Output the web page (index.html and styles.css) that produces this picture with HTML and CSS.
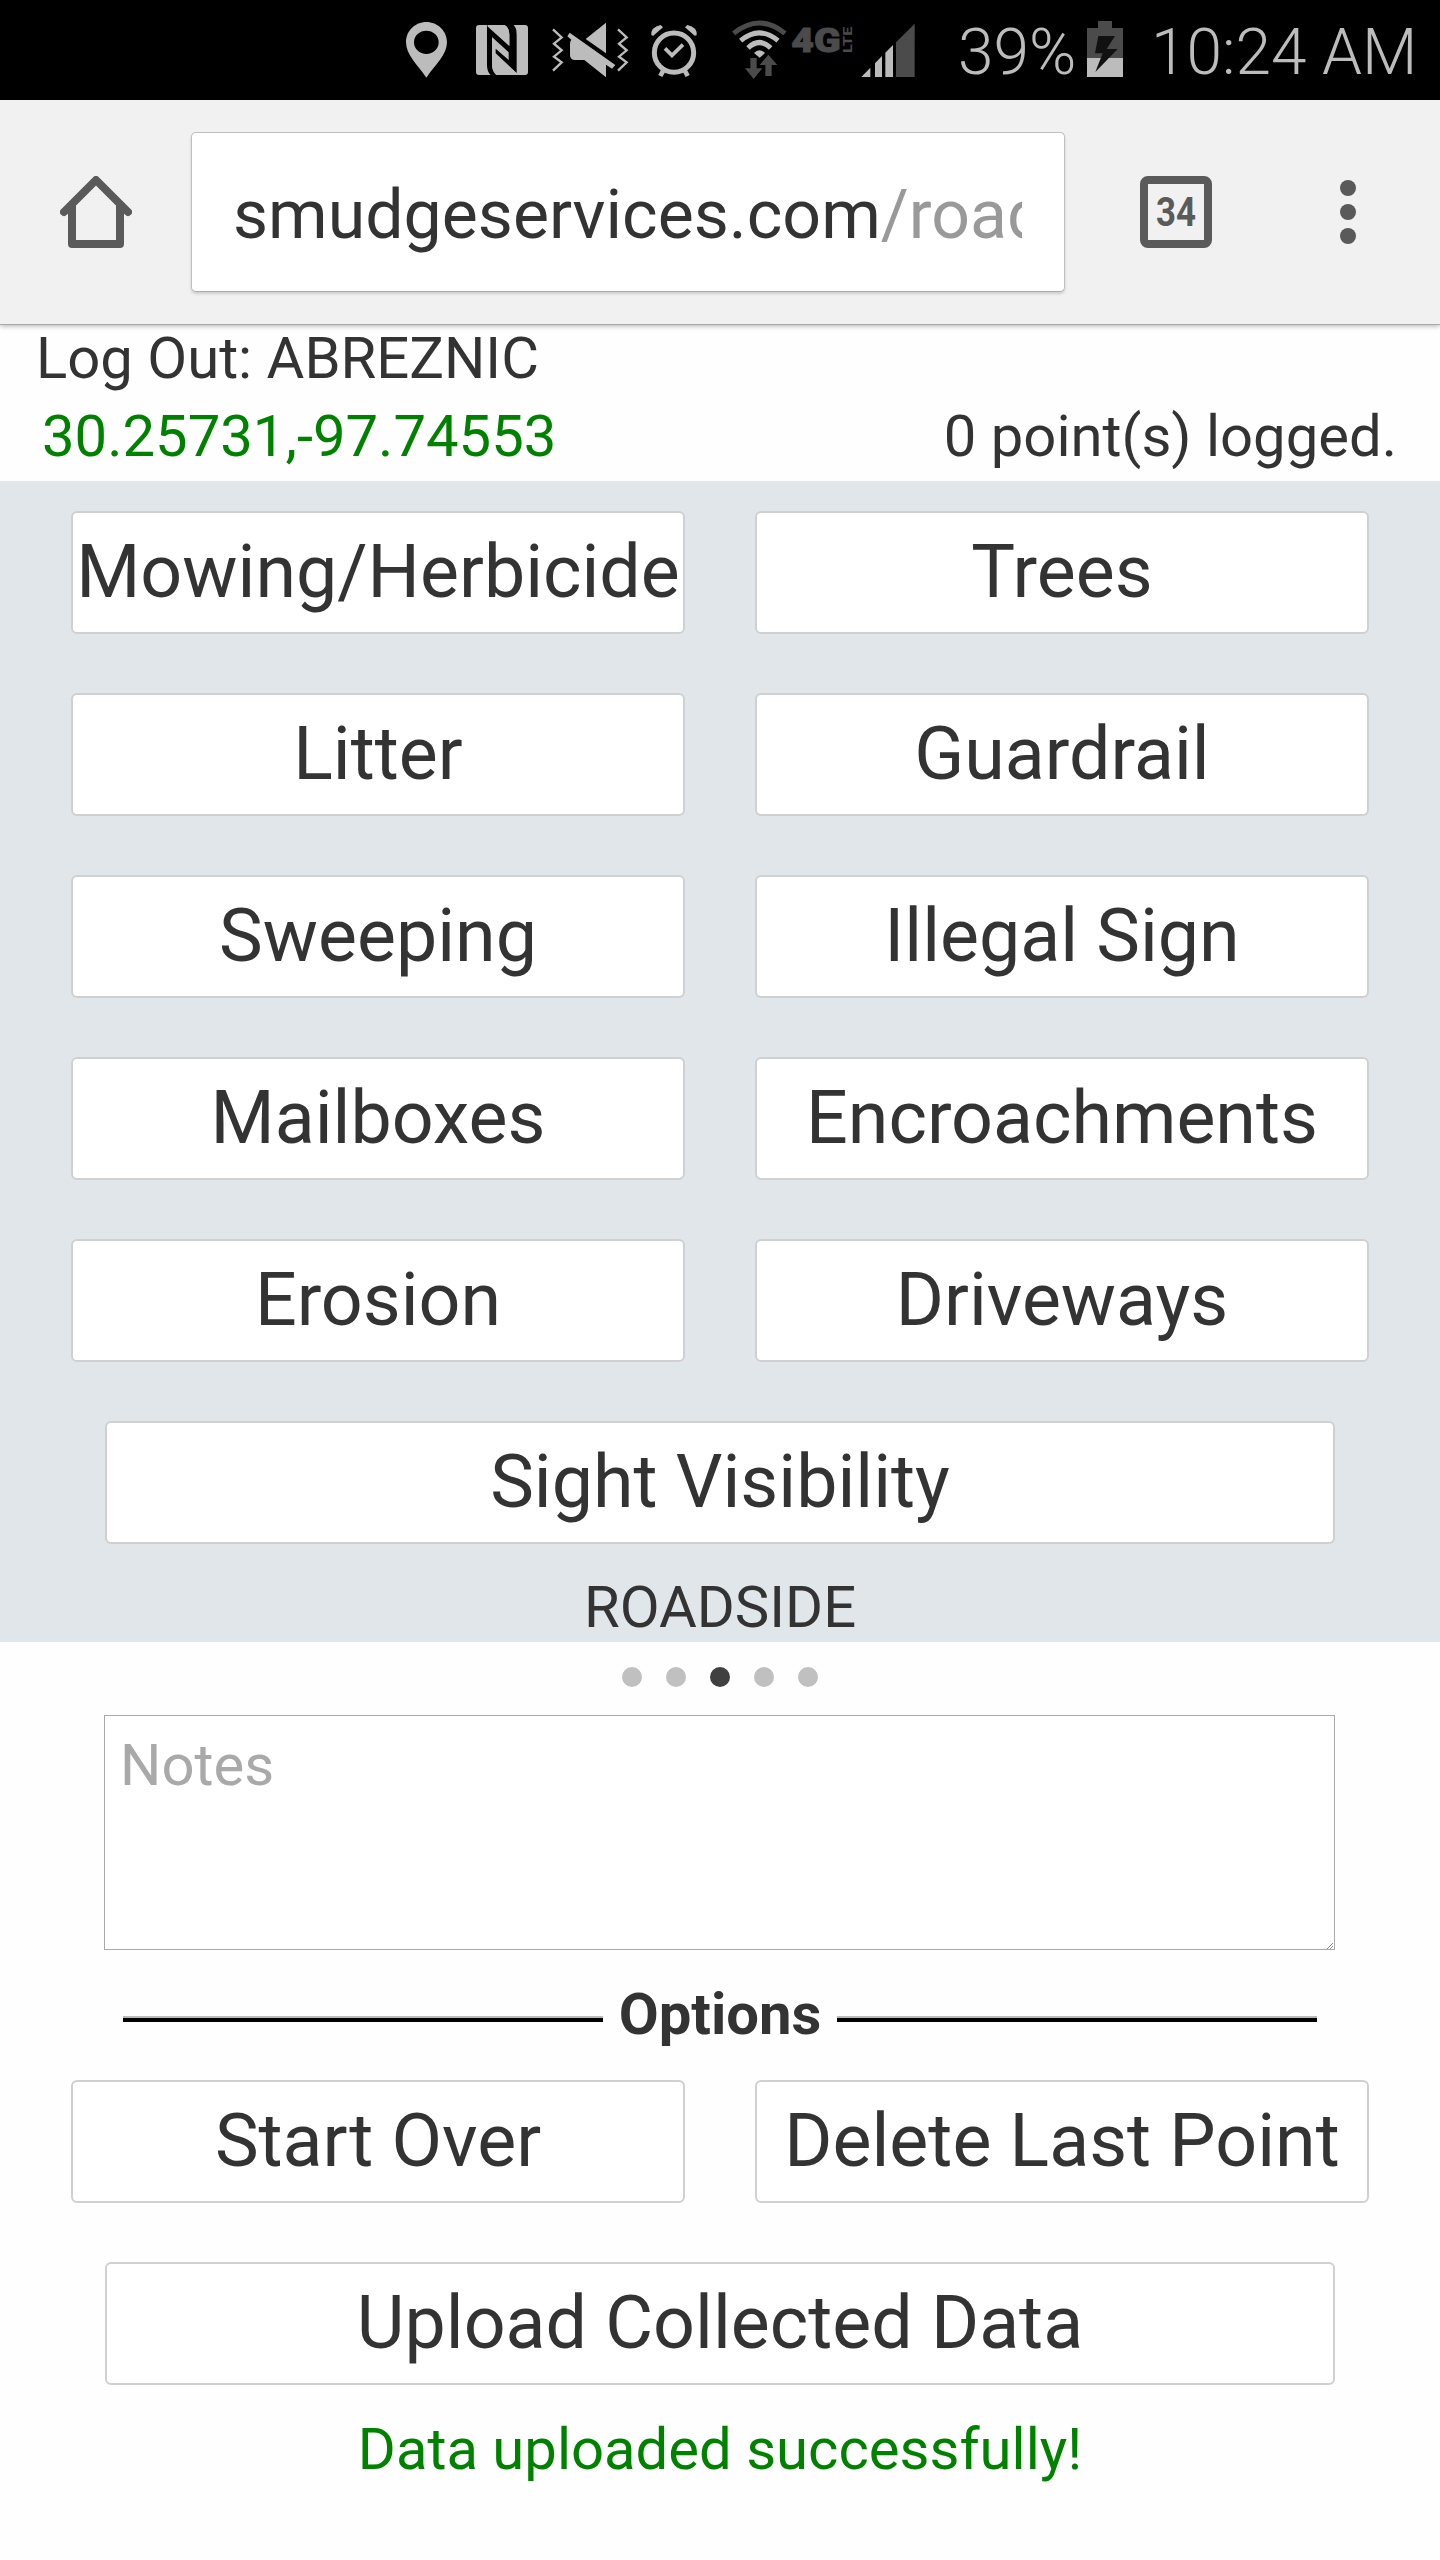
FILE: index.html
```html
<!DOCTYPE html>
<html lang="en">
<head>
<meta charset="utf-8">
<title>Roadside</title>
<link rel="stylesheet" href="styles.css">
</head>
<body>
<div class="status">
  <svg class="pin" width="41" height="100" viewBox="48 0 123 300"><path fill="#bcbcbc" fill-rule="evenodd" d="M109 66C75 66 48 93 48 127C48 165 82 193 109 233C136 193 171 165 171 127C171 93 143 66 109 66ZM109 92A37 35 0 0 1 109 162A37 35 0 0 1 109 92Z"/></svg>
  <svg class="nfc" width="52" height="100" viewBox="258 0 156 300"><rect x="258" y="75" width="156" height="150" rx="9" fill="#bcbcbc"/><path fill="#000" d="M291 75L358 137V104Q358 81 343 74H370Q380 82 380 104V219L317 160V146L356 180V157L306 111V196Q306 214 319 226H302Q291 214 291 196Z"/><path fill="#bcbcbc" d="M292 79L358 138V104Q358 84 343 75H300Z"/><path fill="#bcbcbc" d="M380 219L317 162V196Q317 216 329 225H372Z" opacity="0"/><path fill="#bcbcbc" d="M306 172Q307 158 317 163L379 219V225H330Q306 220 306 192Z"/></svg>
  <svg class="mute" width="78" height="100" viewBox="483 0 234 300"><g fill="none" stroke="#bcbcbc" stroke-width="7"><path d="M489 88L515 112L492 131L515 151L492 170L515 187L489 212"/><path d="M684 88L710 112L687 131L710 151L687 170L710 187L684 212"/></g><path fill="#bcbcbc" d="M648 68V160L587 117ZM544 119Q540 123 540 133V165Q540 180 556 180H583L648 232V194L666 206L676 195L539 98L532 109Z"/></svg>
  <svg class="alarm" width="48" height="100" viewBox="780 0 144 300"><g fill="none" stroke="#bcbcbc"><circle cx="852" cy="158" r="59" stroke-width="15"/><path stroke-width="11" d="M825 145L846 166L879 134"/><path stroke-width="14" d="M820 211L811 228M884 211L893 228"/></g><path fill="#bcbcbc" d="M784 106Q781 82 812 75L819 82L790 107ZM920 106Q923 82 892 75L885 82L914 107Z"/></svg>
  <svg class="wifi" width="56" height="100" viewBox="93 0 168 300"><g fill="none" stroke="#bcbcbc" stroke-width="15"><path stroke="#4b4b4b" d="M101 100Q178 38 255 100"/><path d="M122 122Q178 75 234 122"/><path d="M144 144Q178 111 212 144"/></g><path fill="#bcbcbc" d="M162 159Q178 142 195 159L179 173Z"/><path fill="#4b4b4b" d="M151 174H170V205H187L161 237L135 205H151ZM196 228H215V195H232L205 164L179 195H196Z"/></svg>
  <svg class="lte" width="62" height="100" viewBox="273 0 186 300"><g fill="#4b4b4b" stroke="#4b4b4b" font-family="Roboto, sans-serif" font-weight="900"><text x="274" y="156" font-size="101" stroke-width="3" textLength="148" lengthAdjust="spacingAndGlyphs">4G</text><text transform="translate(456 159) rotate(-90)" font-size="39" font-weight="700" stroke-width="0" textLength="79" lengthAdjust="spacingAndGlyphs">LTE</text></g></svg>
  <svg class="signal" width="54" height="100" viewBox="483 0 162 300"><path fill="#4b4b4b" d="M588 127L644 71V231H588Z"/><path fill="#bcbcbc" d="M484 231L511 203V231ZM525 190L546 168V231H525ZM556 158L579 135V231H556Z"/></svg>
  <span class="percent">39%</span>
  <svg width="38" height="100" viewBox="1158 0 114 300"><path fill="#4b4b4b" d="M1194 63H1236V84H1269V175H1161V84H1194Z"/><path fill="#bcbcbc" d="M1161 174H1269V231H1161Z"/><path fill="#111" d="M1195 108H1245L1220 147H1253L1186 216L1208 160H1185Z"/></svg>
  <span class="time">10:24 AM</span>
</div>
<div class="toolbar">
  <svg class="home" width="72" height="72" viewBox="180 258 216 216"><g fill="none" stroke="#5a5a5a" stroke-width="24" stroke-linejoin="round" stroke-linecap="round"><path d="M192 366L288 270L384 366"/><path d="M216 345V462H360V345"/></g></svg>
  <div class="url"><div class="url-text">smudgeservices.com<span class="path">/roadside</span></div></div>
  <svg class="tabs" width="72" height="72" viewBox="0 0 72 72"><rect x="4" y="4" width="64" height="64" rx="4" fill="none" stroke="#5a5a5a" stroke-width="8"/><text x="16" y="50" font-family="Roboto, sans-serif" font-weight="700" font-size="40" fill="#5a5a5a" textLength="40" lengthAdjust="spacingAndGlyphs">34</text></svg>
  <svg class="more" width="16" height="64" viewBox="0 0 16 64"><g fill="#5a5a5a"><circle cx="8" cy="8" r="8"/><circle cx="8" cy="32" r="8"/><circle cx="8" cy="56" r="8"/></g></svg>
</div>
<div class="account">Log Out: ABREZNIC</div>
<div class="readout"><span class="coords">30.25731,-97.74553</span><span class="count">0 point(s) logged.</span></div>
<div class="panel">
  <div class="grid">
    <button class="btn mowing">Mowing/Herbicide</button><button class="btn">Trees</button>
    <button class="btn">Litter</button><button class="btn">Guardrail</button>
    <button class="btn">Sweeping</button><button class="btn">Illegal Sign</button>
    <button class="btn">Mailboxes</button><button class="btn">Encroachments</button>
    <button class="btn">Erosion</button><button class="btn">Driveways</button>
    <button class="btn wide">Sight Visibility</button>
  </div>
  <div class="caption">ROADSIDE</div>
</div>
<div class="dots"><i></i><i></i><i class="on"></i><i></i><i></i></div>
<div class="notes"><textarea placeholder="Notes"></textarea><svg class="grip" width="6" height="6" viewBox="0 0 6 6"><path d="M0 6L6 0M3 6L6 3" stroke="#8a8a8a" fill="none"/></svg></div>
<div class="options"><div class="rule"></div><b>Options</b><div class="rule"></div></div>
<div class="grid">
  <button class="btn">Start Over</button><button class="btn">Delete Last Point</button>
  <button class="btn wide">Upload Collected Data</button>
</div>
<div class="message">Data uploaded successfully!</div>
</body>
</html>
```
FILE: styles.css
```css
* { box-sizing: border-box; }
body {
  margin: 0;
  width: 1440px;
  height: 2560px;
  overflow: hidden;
  background: #fefefe;
  color: #333;
  font: 58px Roboto, sans-serif;
  white-space: nowrap;
}
svg { display: block; flex: none; }
.status {
  display: flex;
  height: 100px;
  padding-left: 406px;
  background: #000;
  color: #bcbcbc;
  font-size: 64px;
  font-weight: 300;
  line-height: 106px;
}
.nfc { margin-left: 29px; }
.mute { margin-left: 23px; }
.alarm { margin-left: 21px; }
.wifi { margin-left: 33px; }
.lte { margin-left: 4px; }
.signal { margin-left: 8px; }
.percent { width: 171px; padding-left: 43px; }
.time { padding-left: 27px; }
.toolbar {
  display: flex;
  align-items: center;
  height: 225px;
  padding: 0 0 1px 60px;
  background: #f1f1f1;
  border-bottom: 1px solid #a9a9a9;
  box-shadow: 0 1px 5px rgba(0, 0, 0, 0.3);
}
.url {
  width: 874px;
  height: 160px;
  margin-left: 59px;
  padding: 0 42px 0 41px;
  background: #fff;
  border: 1px solid #bfbfbf;
  border-bottom-color: #aaa;
  border-radius: 5px;
  box-shadow: 0 2px 3px rgba(0, 0, 0, 0.15);
}
.url-text {
  overflow: hidden;
  font-size: 68px;
  line-height: 164px;
}
.path { color: #999; }
.tabs { margin-left: 75px; }
.more { margin-left: 128px; }
.account {
  height: 66px;
  padding-left: 36px;
  line-height: 66px;
}
.readout {
  display: flex;
  justify-content: space-between;
  height: 90px;
  padding: 0 43px 0 42px;
  line-height: 90px;
}
.coords, .message { color: #008200; }
.panel {
  height: 1161px;
  padding-top: 30px;
  background: #e1e6ea;
}
.grid {
  display: grid;
  grid-template-columns: 614px 614px;
  grid-auto-rows: 123px;
  gap: 59px 70px;
  justify-content: center;
}
.btn {
  padding: 0 0 2px;
  background: #fff;
  border: 2px solid #d0d0d0;
  border-radius: 6px;
  color: #333;
  font: 73.5px Roboto, sans-serif;
}
.wide {
  grid-column: 1 / 3;
  margin: 0 34px;
}
.caption {
  padding-top: 29px;
  line-height: 69px;
  text-align: center;
}
.dots {
  display: flex;
  align-items: center;
  justify-content: center;
  gap: 24px;
  height: 70px;
  margin-bottom: 3px;
}
.dots i {
  width: 20px;
  height: 20px;
  border-radius: 50%;
  background: #c0c0c0;
}
.dots .on { background: #404040; }
.notes {
  position: relative;
  width: 1231px;
  height: 235px;
  margin-left: 104px;
}
textarea {
  display: block;
  width: 100%;
  height: 100%;
  padding: 15px;
  border: 1px solid #a9a9a9;
  border-radius: 0;
  background: #fff;
  resize: none;
  font: 58px/69px Roboto, sans-serif;
}
textarea::placeholder { color: #a9a9a9; }
.grip {
  position: absolute;
  right: 2px;
  bottom: 1px;
}
.options {
  display: flex;
  align-items: center;
  justify-content: space-between;
  height: 128px;
  margin-bottom: 2px;
  padding: 0 123px;
}
.rule {
  width: 480px;
  height: 6px;
  margin-top: 9px;
  background: #000;
  border-top: 2px solid #bbb;
}
.message {
  line-height: 128px;
  text-align: center;
}
```
